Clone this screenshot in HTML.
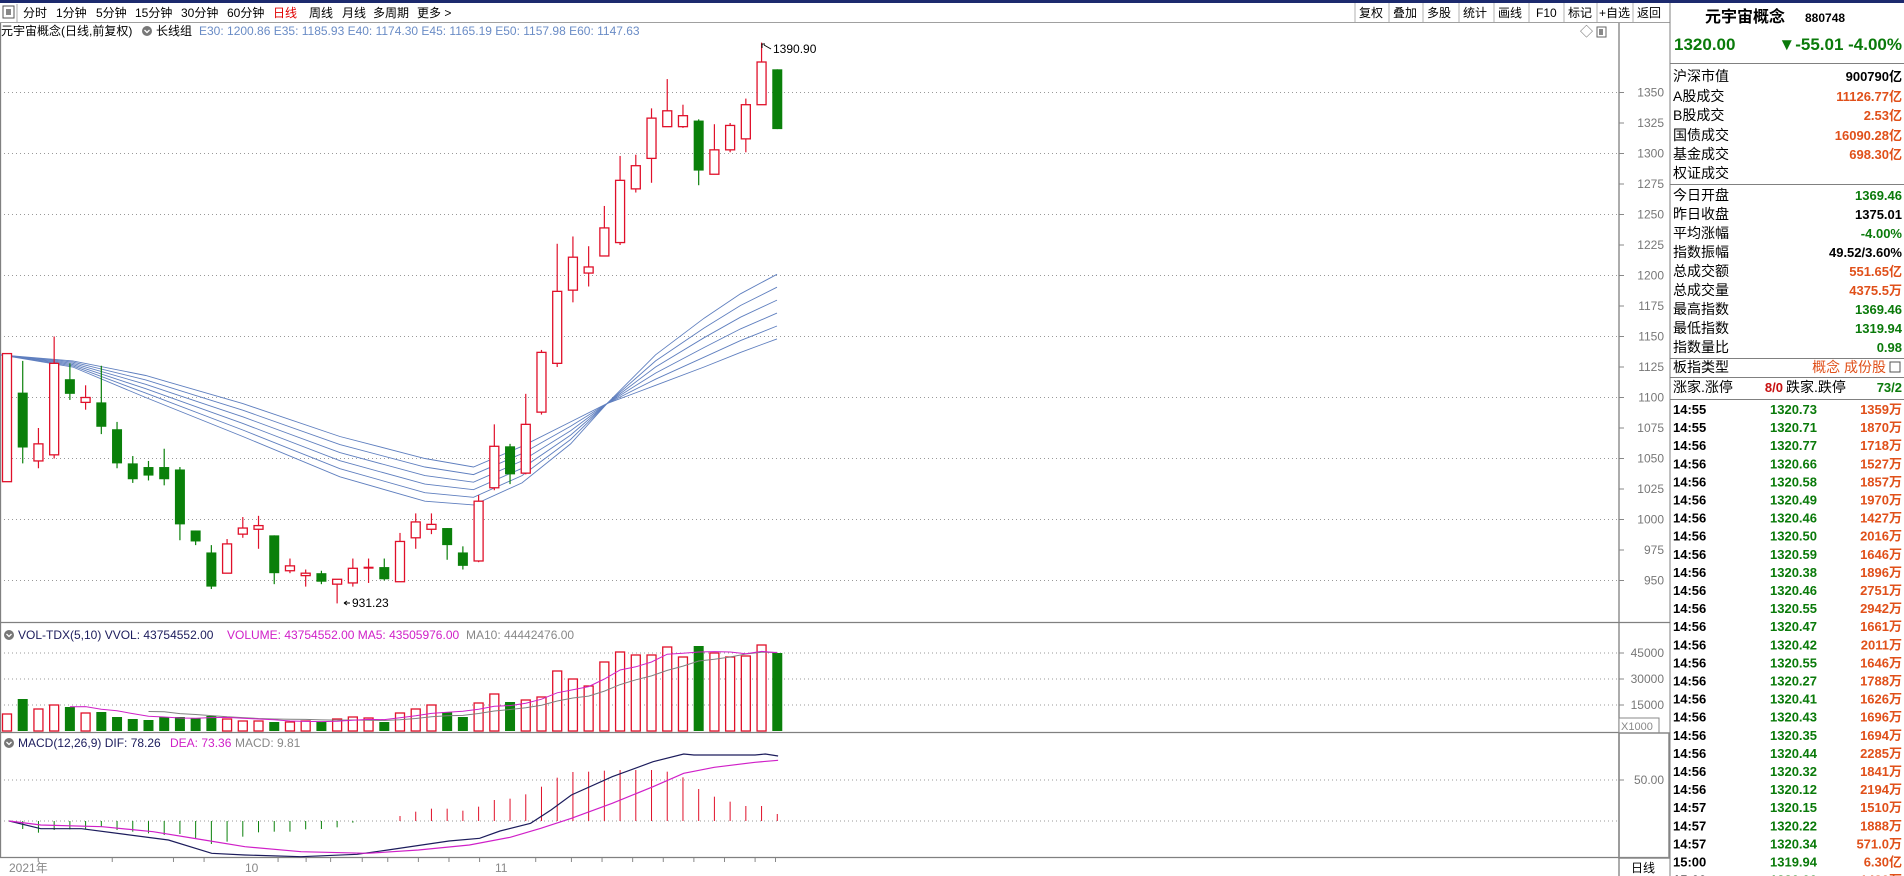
<!DOCTYPE html>
<html><head><meta charset="utf-8"><style>
html,body{margin:0;padding:0;background:#fff;overflow:hidden}
svg{display:block;font-family:"Liberation Sans","Noto Sans CJK SC",sans-serif}
</style></head><body>
<svg id="s" width="1904" height="876" viewBox="0 0 1904 876" xmlns="http://www.w3.org/2000/svg">
<rect width="1904" height="876" fill="#fff"/>
<rect x="0" y="0" width="1904" height="3" fill="#1c2a6e"/>
<g id="grid"></g>
<g id="dyn"></g>
<!-- toolbar -->
<g font-size="12" fill="#000">
<rect x="3" y="6" width="11" height="12" fill="none" stroke="#555"/><rect x="6" y="9" width="5" height="6" fill="#888"/>
<line x1="17" y1="4" x2="17" y2="22" stroke="#aaa"/>
<text x="23" y="17">分时</text><text x="56" y="17">1分钟</text><text x="96" y="17">5分钟</text><text x="135" y="17">15分钟</text><text x="181" y="17">30分钟</text><text x="227" y="17">60分钟</text><text x="273" y="17" fill="#e00000">日线</text><text x="309" y="17">周线</text><text x="342" y="17">月线</text><text x="373" y="17">多周期</text><text x="417" y="17">更多 &gt;</text>
</g>
<g font-size="12" fill="#000">
<text x="1359" y="17">复权</text><text x="1393" y="17">叠加</text><text x="1427" y="17">多股</text><text x="1463" y="17">统计</text><text x="1498" y="17">画线</text><text x="1536" y="17">F10</text><text x="1568" y="17">标记</text><text x="1599" y="17">+自选</text><text x="1637" y="17">返回</text>
</g>
<g stroke="#b0b0b0"><line x1="1355" y1="3" x2="1355" y2="22"/><line x1="1389" y1="3" x2="1389" y2="22"/><line x1="1423" y1="3" x2="1423" y2="22"/><line x1="1459" y1="3" x2="1459" y2="22"/><line x1="1494" y1="3" x2="1494" y2="22"/><line x1="1529" y1="3" x2="1529" y2="22"/><line x1="1564" y1="3" x2="1564" y2="22"/><line x1="1597" y1="3" x2="1597" y2="22"/><line x1="1633" y1="3" x2="1633" y2="22"/></g>
<line x1="0" y1="22.5" x2="1670" y2="22.5" stroke="#a0a0a0"/>
<!-- info line -->
<text x="1" y="35" font-size="12" fill="#000">元宇宙概念(日线,前复权)</text>
<circle cx="147" cy="31" r="5" fill="#777"/><path d="M144.5 30 l2.5 2.5 l2.5 -2.5" stroke="#fff" stroke-width="1.3" fill="none"/>
<text x="156" y="35" font-size="12" fill="#000">长线组</text>
<text x="199" y="35" font-size="12" fill="#6a8cc6">E30: 1200.86  E35: 1185.93  E40: 1174.30  E45: 1165.19  E50: 1157.98  E60: 1147.63</text>
<text x="1580" y="36" font-size="13" fill="#666">◇</text>
<rect x="1597" y="27" width="9" height="10" fill="none" stroke="#666"/><rect x="1599" y="29" width="4" height="6" fill="#888"/>
<!-- vol title -->
<circle cx="9" cy="635" r="5" fill="#777"/><path d="M6.5 634 l2.5 2.5 l2.5 -2.5" stroke="#fff" stroke-width="1.3" fill="none"/>
<text x="18" y="639" font-size="12" fill="#1c1c5c">VOL-TDX(5,10) VVOL: 43754552.00</text>
<text x="227" y="639" font-size="12" fill="#d020c8">VOLUME: 43754552.00  MA5: 43505976.00</text>
<text x="466" y="639" font-size="12" fill="#888">MA10: 44442476.00</text>
<!-- macd title -->
<circle cx="9" cy="743" r="5" fill="#777"/><path d="M6.5 742 l2.5 2.5 l2.5 -2.5" stroke="#fff" stroke-width="1.3" fill="none"/>
<text x="18" y="747" font-size="12" fill="#1c1c5c">MACD(12,26,9) DIF: 78.26</text>
<text x="170" y="747" font-size="12" fill="#d020c8">DEA: 73.36</text>
<text x="235" y="747" font-size="12" fill="#888">MACD: 9.81</text>
<!-- annotations -->
<text x="773" y="53" font-size="12" fill="#000">1390.90</text>
<path d="M762 48 l0 -4 l3 0 M764 45 l7 4" stroke="#000" fill="none"/>
<text x="352" y="607" font-size="12" fill="#000">931.23</text>
<path d="M350 603 l-6 0 M344 603 l3 -2 M344 603 l3 2" stroke="#000" fill="none"/>
<!-- axes labels -->
<g id="axis" font-size="12" fill="#777" text-anchor="end"></g>
<rect x="1619" y="718" width="40" height="15" fill="#fff" stroke="#888"/>
<text x="1621" y="730" font-size="11" fill="#888">X1000</text>
<rect x="1619" y="733" width="50" height="125" fill="none" stroke="#888" stroke-width="1.5"/>
<text x="1631" y="872" font-size="12" fill="#000">日线</text>
<text x="9" y="872" font-size="12" fill="#888">2021年</text>
<text x="245" y="872" font-size="12" fill="#888">10</text>
<text x="495" y="872" font-size="12" fill="#888">11</text>
<!-- right panel -->
<line x1="1670" y1="3" x2="1670" y2="876" stroke="#808080"/>
<text x="1705" y="22" font-size="16" font-weight="bold" fill="#000">元宇宙概念</text>
<text x="1805" y="22" font-size="12" font-weight="bold" fill="#000">880748</text>
<text x="1674" y="50" font-size="17" font-weight="bold" fill="#0a7a0a">1320.00</text>
<text x="1902" y="50" font-size="17" font-weight="bold" fill="#0a7a0a" text-anchor="end">▼-55.01 -4.00%</text>
<g id="rp"></g>
</svg>
<script>
var NS="http://www.w3.org/2000/svg";
function el(p,t,a,txt){var e=document.createElementNS(NS,t);for(var k in a)e.setAttribute(k,a[k]);if(txt!=null)e.textContent=txt;document.getElementById(p).appendChild(e);return e;}
var dyn="dyn",grid="grid";
function Y(p){return 92.5+(1350-p)*1.22;}
function X(i){return 7+15.72*i;}
var R="#e0102a",G="#0a800a";
for(var p=1350;p>=950;p-=50){el(grid,"line",{x1:0,y1:Y(p),x2:1619,y2:Y(p),stroke:"#999","stroke-dasharray":"1 3"});}
for(var p=1350;p>=950;p-=25){el(grid,"line",{x1:1619,y1:Y(p),x2:1624,y2:Y(p),stroke:"#888"});el("axis","text",{x:1664,y:Y(p)+4},String(p));}
[653,679,705].forEach(function(y,k){el(grid,"line",{x1:0,y1:y,x2:1619,y2:y,stroke:"#999","stroke-dasharray":"1 3"});el(grid,"line",{x1:1619,y1:y,x2:1624,y2:y,stroke:"#888"});el("axis","text",{x:1664,y:y+4},["45000","30000","15000"][k]);});
el(grid,"line",{x1:0,y1:780,x2:1619,y2:780,stroke:"#999","stroke-dasharray":"1 3"});
el(grid,"line",{x1:0,y1:821,x2:1619,y2:821,stroke:"#999","stroke-dasharray":"1 3"});
el(grid,"line",{x1:1619,y1:780,x2:1624,y2:780,stroke:"#888"});el("axis","text",{x:1664,y:784},"50.00");
[[0,622.5,1670,622.5],[0,732.5,1619,732.5],[0,857.5,1670,857.5],[1619,22,1619,876],[0.5,22,0.5,858]].forEach(function(l){el(grid,"line",{x1:l[0],y1:l[1],x2:l[2],y2:l[3],stroke:"#808080","stroke-width":1.3});});
[75,220,340,400,545,600,648,710,760,820,880,940,1050,1120,1180,1240,1300,1360,1420,1480,1520].forEach(function(d){var x=d/1.96;el(grid,"line",{x1:x,y1:858,x2:x,y2:862,stroke:"#888"});});
var C=[[1031,1136,1136,1031],[1104,1059,1130,1046],[1048,1062,1075,1042],[1053,1128,1150,1050],[1115,1103,1128,1098],[1096,1100,1110,1090],[1096,1076,1126,1070],[1074,1046,1080,1042],[1046,1033,1052,1030],[1043,1036,1048,1032],[1043,1033,1058,1028],
[1041,996,1043,983],[991,982,991,979],[973,945,979,943],[956,980,984,956],[988,993,1002,985],[992,995,1003,976],[987,956,987,947],[958,962,968,956],[954,956,959,945],[956,949,958,947],[947,951,951,931.23],[948,960,968,945],[960,960.5,968,948],[961,951,968,950],[949,982,989,949],[985,998,1005,976],[992,996,1005,988],[993,979,993,967],[973,962,978,959],
[966,1015,1020,965],[1026,1060,1078,1024],[1060,1037,1062,1029],[1038,1078,1103,1037],[1088,1137,1139,1086],[1128,1187,1226,1125],[1188,1215,1232,1178],[1202,1207,1224,1191],[1216,1239,1257,1216],[1227,1278,1298,1225],[1271,1290,1299,1268],[1296,1329,1337,1276],[1322,1335,1361,1322],[1322,1331,1340,1321],[1327,1286,1328,1274],[1283,1303,1324,1283],[1303,1323,1325,1301],[1312,1340,1345,1301],[1340,1375,1390.9,1340],[1369,1320,1369,1320]];
var e30=[[0,1135],[60,1125],[120,1100],[200,1068],[280,1035],[350,1015],[390,1012],[430,1030],[470,1062],[500,1095],[540,1135],[580,1165],[610,1185],[640,1201]];
var e60=[[0,1135],[60,1130],[120,1118],[200,1095],[280,1068],[350,1050],[390,1043],[430,1060],[470,1080],[500,1095],[540,1110],[580,1125],[610,1137],[640,1148]];
for(var k=0;k<6;k++){var f=k/5,pts=[];for(var j=0;j<e30.length;j++){var pr=e30[j][1]*(1-f)+e60[j][1]*f;pts.push((e30[j][0]*1.214).toFixed(1)+","+Y(pr).toFixed(1));}
el(dyn,"polyline",{points:pts.join(" "),fill:"none",stroke:"#5f7fbf","stroke-width":0.9});}
C.forEach(function(c,i){var x=X(i),up=c[1]>=c[0],col=up?R:G,t=Y(Math.max(c[0],c[1])),b=Y(Math.min(c[0],c[1]));
el(dyn,"line",{x1:x,y1:Y(c[2]),x2:x,y2:Y(c[3]),stroke:col,"stroke-width":1.2});
if(b-t<1.5){el(dyn,"line",{x1:x-5,y1:t,x2:x+5,y2:t,stroke:col,"stroke-width":2});}
else if(up)el(dyn,"rect",{x:x-4.5,y:t,width:9,height:b-t,fill:"#fff",stroke:col,"stroke-width":1.3});
else el(dyn,"rect",{x:x-5,y:t,width:10,height:b-t,fill:col});});
var V=[17,32,22,26,24,18,19,14,12,11,14,14,13,15,12,10,10,9,9,10,9,12,14,13,9,18,22,26,19,14,28,37,29,31,34,60,52,45,69,79,76,76,84,74,85,78,74,75,86,78];
V.forEach(function(h,i){var x=X(i),c=C[i],up=c[1]>=c[0];
if(up)el(dyn,"rect",{x:x-4.5,y:731-h,width:9,height:h,fill:"#fff",stroke:R,"stroke-width":1.3});else el(dyn,"rect",{x:x-5,y:731-h,width:10,height:h,fill:G});});
function ma(n,col){var pts=[];for(var i=n-1;i<V.length;i++){var s=0;for(var j=0;j<n;j++)s+=V[i-j];pts.push(X(i).toFixed(1)+","+(731-s/n).toFixed(1));}el(dyn,"polyline",{points:pts.join(" "),fill:"none",stroke:col,"stroke-width":1});}
ma(10,"#808080");ma(5,"#d020c8");
var gb=[297,308,300,298,298,290,300,305,310,315,312,325,342,335,320,307,305,305,298,297,292,278];
gb.forEach(function(d,k){var x=X(k+1);el(dyn,"line",{x1:x,y1:821,x2:x,y2:730+d/3,stroke:G,"stroke-width":1});});
var rb=[258,245,236,236,242,230,210,206,193,170,143,126,125,122,120,120,120,125,142,177,200,215,228,228,252];
rb.forEach(function(d,k){var x=X(k+25);el(dyn,"line",{x1:x,y1:821,x2:x,y2:730+d/3,stroke:R,"stroke-width":1});});
function ml(a,col){el(dyn,"polyline",{points:a.map(function(q){return (q[0]/1.96).toFixed(1)+","+(730+q[1]/3).toFixed(1);}).join(" "),fill:"none",stroke:col,"stroke-width":1.2});}
ml([[18,273],[80,296],[160,296],[240,312],[330,330],[415,370],[480,375],[590,380],[700,373],[760,360],[880,333],[940,325],[980,303],[1040,280],[1080,240],[1120,195],[1200,140],[1280,95],[1340,72],[1360,75],[1480,75],[1500,72],[1525,78]],"#1c1c5c");
ml([[18,273],[80,285],[200,290],[300,305],[400,330],[480,350],[590,365],[720,370],[820,360],[920,345],[1000,322],[1060,295],[1120,265],[1200,220],[1280,170],[1340,130],[1400,112],[1480,97],[1525,91]],"#d020c8");
var rp="rp",GR="#0a7a0a",OR="#e0501a";
el(rp,"line",{x1:1670,y1:63.5,x2:1904,y2:63.5,stroke:"#808080"});
function row(y,l,v,c){el(rp,"text",{x:1673,y:y+5,"font-size":14,fill:"#000"},l);if(v)el(rp,"text",{x:1902,y:y+5,"font-size":13,"font-weight":"bold",fill:c,"text-anchor":"end"},v);}
row(76,"沪深市值","900790亿","#000");row(96,"A股成交","11126.77亿",OR);row(115,"B股成交","2.53亿",OR);row(135,"国债成交","16090.28亿",OR);row(154,"基金成交","698.30亿",OR);row(173,"权证成交","",OR);
el(rp,"line",{x1:1670,y1:184.5,x2:1904,y2:184.5,stroke:"#808080"});
var r2=[["今日开盘","1369.46",GR],["昨日收盘","1375.01","#000"],["平均涨幅","-4.00%",GR],["指数振幅","49.52/3.60%","#000"],["总成交额","551.65亿",OR],["总成交量","4375.5万",OR],["最高指数","1369.46",GR],["最低指数","1319.94",GR],["指数量比","0.98",GR]];
r2.forEach(function(r,k){row(195+k*19,r[0],r[1],r[2]);});
el(rp,"line",{x1:1670,y1:358.5,x2:1904,y2:358.5,stroke:"#808080"});
el(rp,"text",{x:1673,y:372,"font-size":14,fill:"#000"},"板指类型");
el(rp,"text",{x:1886,y:372,"font-size":14,fill:OR,"text-anchor":"end"},"概念 成份股");
el(rp,"rect",{x:1890,y:362,width:10,height:10,fill:"none",stroke:"#555"});
el(rp,"line",{x1:1670,y1:377.5,x2:1904,y2:377.5,stroke:"#808080"});
el(rp,"text",{x:1673,y:392,"font-size":14,fill:"#000"},"涨家.涨停");
el(rp,"text",{x:1783,y:392,"font-size":13,"font-weight":"bold",fill:"#c81010","text-anchor":"end"},"8/0");
el(rp,"text",{x:1786,y:392,"font-size":14,fill:"#000"},"跌家.跌停");
el(rp,"text",{x:1902,y:392,"font-size":13,"font-weight":"bold",fill:GR,"text-anchor":"end"},"73/2");
el(rp,"line",{x1:1670,y1:399.5,x2:1904,y2:399.5,stroke:"#808080"});
var T=[["14:55","1320.73","1359万"],["14:55","1320.71","1870万"],["14:56","1320.77","1718万"],["14:56","1320.66","1527万"],["14:56","1320.58","1857万"],["14:56","1320.49","1970万"],["14:56","1320.46","1427万"],["14:56","1320.50","2016万"],["14:56","1320.59","1646万"],["14:56","1320.38","1896万"],["14:56","1320.46","2751万"],["14:56","1320.55","2942万"],["14:56","1320.47","1661万"],["14:56","1320.42","2011万"],["14:56","1320.55","1646万"],["14:56","1320.27","1788万"],["14:56","1320.41","1626万"],["14:56","1320.43","1696万"],["14:56","1320.35","1694万"],["14:56","1320.44","2285万"],["14:56","1320.32","1841万"],["14:56","1320.12","2194万"],["14:57","1320.15","1510万"],["14:57","1320.22","1888万"],["14:57","1320.34","571.0万"],["15:00","1319.94","6.30亿"],["15:00","1320.00","1430万"]];
T.forEach(function(r,k){var y=409+k*18.1+5;el(rp,"text",{x:1673,y:y,"font-size":13,"font-weight":"bold",fill:"#000"},r[0]);el(rp,"text",{x:1817,y:y,"font-size":13,"font-weight":"bold",fill:GR,"text-anchor":"end"},r[1]);el(rp,"text",{x:1902,y:y,"font-size":13,"font-weight":"bold",fill:OR,"text-anchor":"end"},r[2]);});
</script>
</body></html>
